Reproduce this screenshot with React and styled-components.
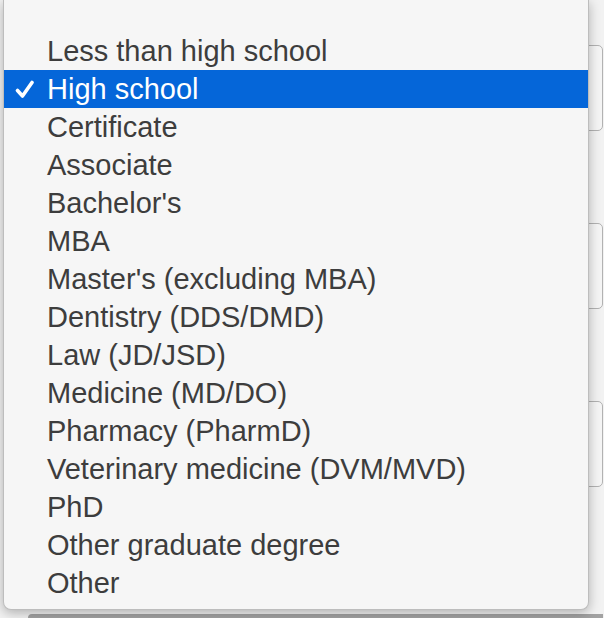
import React from "react";
import styled, { createGlobalStyle } from "styled-components";

const GlobalStyle = createGlobalStyle`
  html, body {
    margin: 0;
    padding: 0;
    background: #f2f2f2;
  }
  * {
    box-sizing: border-box;
  }
`;

const Page = styled.div`
  position: relative;
  width: 604px;
  height: 618px;
  overflow: hidden;
  background: #f2f2f2;
  font-family: "Liberation Sans", Arial, sans-serif;
`;

const Form = styled.div`
  display: flex;
  flex-direction: column;
  gap: 92px;
  padding: 45px 1px 0 30px;
`;

const FieldBox = styled.div`
  height: 86px;
  border: 1px solid #b2b2b2;
  border-radius: 5px;
  background: #f5f5f5;
`;

const ButtonEdge = styled.div`
  margin-top: 35px;
  margin-left: -2px;
  height: 12px;
  border-top: 4px solid #a2a2a2;
  border-radius: 4px 0 0 0;
  background: #e4e4e4;
`;

const Menu = styled.ul`
  position: absolute;
  left: 3px;
  top: 0;
  width: 586px;
  height: 610px;
  margin: 0;
  padding: 32px 0 8px;
  list-style: none;
  background: #f6f6f6;
  border: 1px solid #bdbdbd;
  border-top: none;
  border-radius: 0 0 8px 8px;
  box-shadow: 0 3px 12px rgba(0, 0, 0, 0.28);
`;

const Item = styled.li`
  display: flex;
  align-items: center;
  height: 38px;
  padding-left: 11px;
  font-size: 29px;
  line-height: 38px;
  white-space: nowrap;
  color: ${(p) => (p.$selected ? "#ffffff" : "#3d3d3d")};
  background: ${(p) => (p.$selected ? "#0566d9" : "transparent")};
`;

const CheckSlot = styled.span`
  display: flex;
  align-items: center;
  width: 32px;
  height: 100%;
`;

const Check = () => (
  <svg width="20" height="19" viewBox="0 0 20 19">
    <path
      d="M2.5 10.5 L7.5 16 L17 2.5"
      fill="none"
      stroke="#fff"
      strokeWidth="3.6"
      strokeLinecap="round"
      strokeLinejoin="round"
    />
  </svg>
);

const options = [
  "Less than high school",
  "High school",
  "Certificate",
  "Associate",
  "Bachelor's",
  "MBA",
  "Master's (excluding MBA)",
  "Dentistry (DDS/DMD)",
  "Law (JD/JSD)",
  "Medicine (MD/DO)",
  "Pharmacy (PharmD)",
  "Veterinary medicine (DVM/MVD)",
  "PhD",
  "Other graduate degree",
  "Other",
];

const selected = "High school";

export default function App() {
  return (
    <Page>
      <GlobalStyle />
      <Form>
        <FieldBox />
        <FieldBox />
        <FieldBox />
        <ButtonEdge />
      </Form>
      <Menu>
        {options.map((opt) => (
          <Item key={opt} $selected={opt === selected}>
            <CheckSlot>{opt === selected && <Check />}</CheckSlot>
            {opt}
          </Item>
        ))}
      </Menu>
    </Page>
  );
}
